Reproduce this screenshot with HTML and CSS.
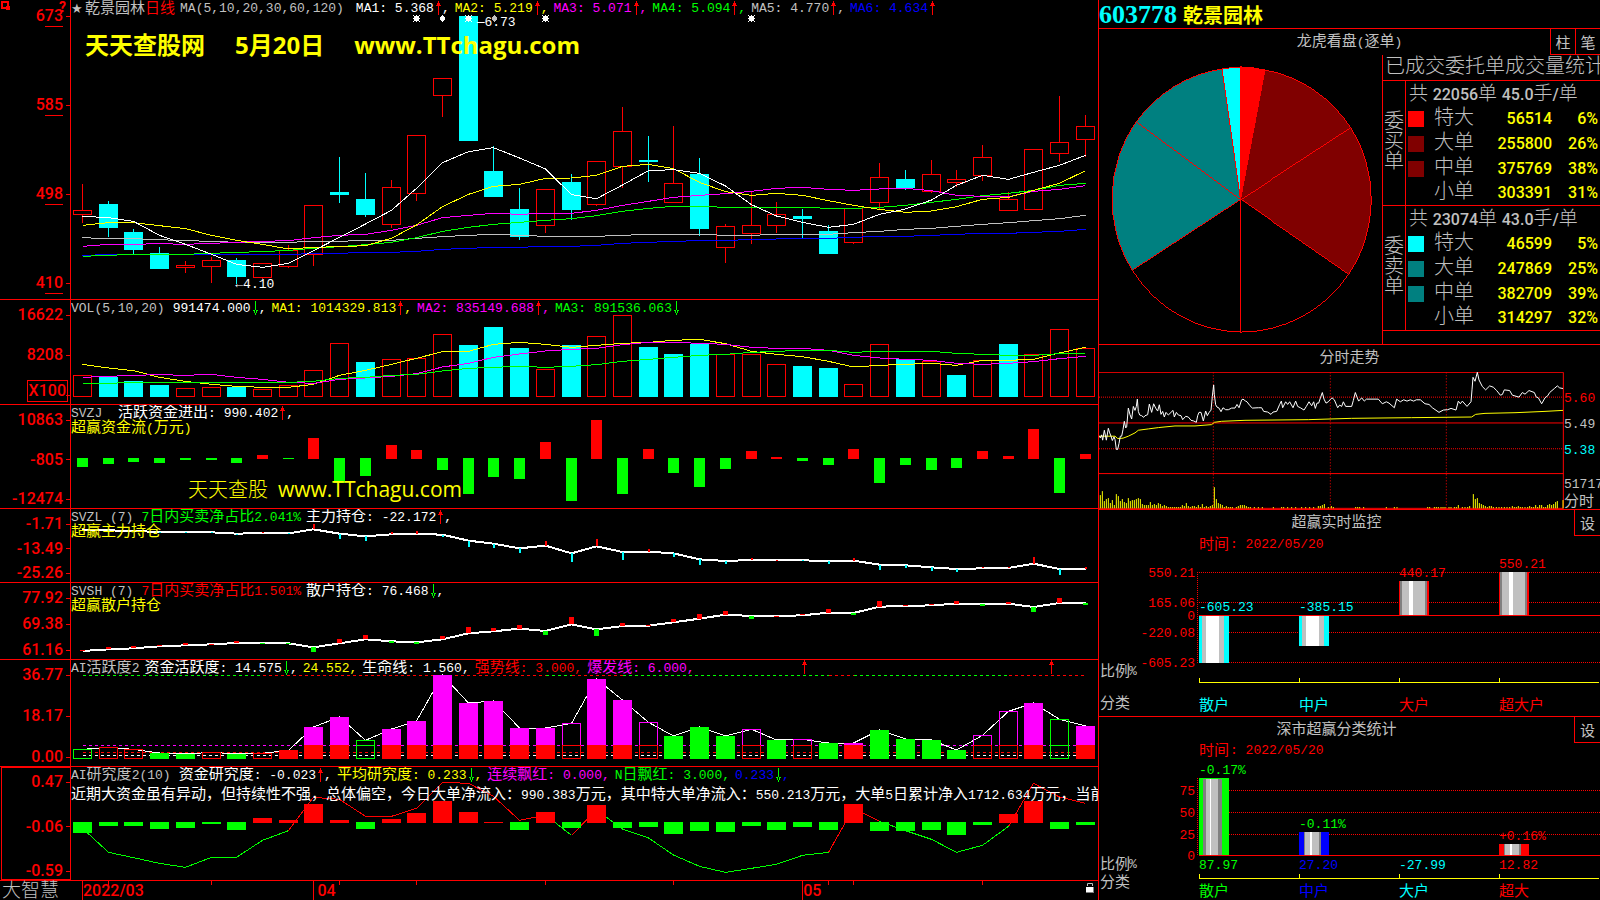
FILE: index.html
```
<!DOCTYPE html>
<html lang="zh-CN">
<head>
    <meta charset="UTF-8">
    <meta name="viewport" content="width=device-width, initial-scale=1.0">
    <title>大智慧 - 乾景园林 603778</title>
    <link rel="stylesheet" href="styles.css">
</head>
<body>
    <svg class="defs" aria-hidden="true">
        <symbol id="up" viewBox="0 0 8 14"><path d="M4 0h1v14h-1zM3 2h3v2h1v1h-5v-1h1z"/></symbol>
        <symbol id="down" viewBox="0 0 8 14"><path d="M4 0h1v14h-1zM3 12h3v-2h1v-1h-5v1h1z"/></symbol>
        <symbol id="star" viewBox="0 0 7 7"><path d="M1 1h5v5h-5zM0 0h1v1h-1zM6 0h1v1h-1zM0 6h1v1h-1zM6 6h1v1h-1zM3 0h1v7h-1zM0 3h7v1h-7z"/></symbol>
        <symbol id="star-thin" viewBox="0 0 7 7"><path d="M3 0h1v1h1v1h1v3h-1v1h-1v1h-1v-1h-1v-1h-1v-3h1v-1h1z"/></symbol>
    </svg>

    <div class="terminal">
        <!-- 左侧K线与指标 -->
        <main class="charts">
            <section class="panel">
                <div class="axis axis-price">
                    <svg class="pin" viewBox="0 0 9 9"><path d="M1 1h6v6h-6zM6 6h2v2h-2z"/></svg>
                    <span class="help">?</span>
                    <span>6<u>73</u></span><span>5<u>85</u></span><span>4<u>98</u></span><span>4<u>10</u></span>
                </div>
                <div class="plot">
                    <svg id="kline" class="chart" viewBox="0 0 1027 897" preserveAspectRatio="none"></svg>
                    <div class="readout">
                        <span class="silver"><span class="mark">★</span><span class="zh">乾景园林</span><span class="zh red">日线</span></span>
                        <span class="silver params">MA(5,10,20,30,60,120)</span>
                        <span class="white">MA1: 5.368<svg class="arrow red"><use href="#up"/></svg>,</span>
                        <span class="yellow">MA2: 5.219<svg class="arrow red"><use href="#up"/></svg>,</span>
                        <span class="magenta">MA3: 5.071<svg class="arrow red"><use href="#up"/></svg>,</span>
                        <span class="lime">MA4: 5.094<svg class="arrow red"><use href="#up"/></svg>,</span>
                        <span class="silver">MA5: 4.770<svg class="arrow red"><use href="#up"/></svg>,</span>
                        <span class="blue">MA6: 4.634<svg class="arrow red"><use href="#up"/></svg></span>
                    </div>
                    <div id="stars"></div>
                    <span class="note note-high">―6.73</span>
                    <span class="note note-low">←4.10</span>
                    <div class="banner"><span>天天查股网</span><span>5月20日</span><span>www.TTchagu.com</span></div>
                </div>
            </section>

            <section class="panel">
                <div class="axis">
                    <span>16622</span><span>8208</span><span></span>
                    <b class="unit">X100</b>
                </div>
                <div class="plot">
                    <svg id="volume" class="chart" viewBox="0 15 1027 312" preserveAspectRatio="none"></svg>
                    <div class="readout">
                        <span class="silver name">VOL(5,10,20)</span>
                        <span class="white">991474.000<svg class="arrow lime"><use href="#down"/></svg>,</span>
                        <span class="yellow">MA1: 1014329.813<svg class="arrow red"><use href="#up"/></svg>,</span>
                        <span class="magenta">MA2: 835149.688<svg class="arrow red"><use href="#up"/></svg>,</span>
                        <span class="lime">MA3: 891536.063<svg class="arrow lime"><use href="#down"/></svg></span>
                    </div>
                </div>
            </section>

            <section class="panel">
                <div class="axis"><span>10863</span><span>-805</span><span>-12474</span></div>
                <div class="plot">
                    <svg id="flow" class="chart" viewBox="0 330 1027 309" preserveAspectRatio="none"></svg>
                    <div class="readout">
                        <span class="silver name">SVZJ&nbsp;</span>
                        <span class="white"><span class="zh">活跃资金进出</span>: 990.402<svg class="arrow red"><use href="#up"/></svg>,</span>
                    </div>
                    <div class="readout yellow"><span><span class="zh">超赢资金流</span>(<span class="zh">万元</span>)</span></div>
                    <div class="banner-small"><span>天天查股</span><span class="site">www.TTchagu.com</span></div>
                </div>
            </section>

            <section class="panel">
                <div class="axis"><span>-1.71</span><span>-13.49</span><span>-25.26</span></div>
                <div class="plot">
                    <svg id="main-hold" class="chart" viewBox="0 12 1027 219" preserveAspectRatio="none"></svg>
                    <div class="readout">
                        <span class="silver name">SVZL (7)</span>
                        <span class="lime">7<span class="zh">日内买卖净占比</span>2.041%</span>
                        <span class="white"><span class="zh">主力持仓</span>: -22.172<svg class="arrow red"><use href="#up"/></svg>,</span>
                    </div>
                    <div class="readout yellow"><span class="zh">超赢主力持仓</span></div>
                </div>
            </section>

            <section class="panel">
                <div class="axis"><span>77.92</span><span>69.38</span><span>61.16</span></div>
                <div class="plot">
                    <svg id="retail-hold" class="chart" viewBox="0 234 1027 228" preserveAspectRatio="none"></svg>
                    <div class="readout">
                        <span class="silver name">SVSH (7)</span>
                        <span class="red">7<span class="zh">日内买卖净占比</span>1.501%</span>
                        <span class="white"><span class="zh">散户持仓</span>: 76.468<svg class="arrow lime"><use href="#down"/></svg>,</span>
                    </div>
                    <div class="readout yellow"><span class="zh">超赢散户持仓</span></div>
                </div>
            </section>

            <section class="panel">
                <div class="axis"><span>36.77</span><span>18.17</span><span>0.00</span></div>
                <div class="plot">
                    <svg id="activity" class="chart" viewBox="0 15 1027 318" preserveAspectRatio="none"></svg>
                    <div class="readout">
                        <span class="silver">AI<span class="zh">活跃度</span>2</span>
                        <span class="white"><span class="zh">资金活跃度</span>: 14.575<svg class="arrow lime"><use href="#down"/></svg>,</span>
                        <span class="yellow">24.552,</span>
                        <span class="white"><span class="zh">生命线</span>: 1.560,</span>
                        <span class="red"><span class="zh">强势线</span>: 3.000,</span>
                        <span class="magenta"><span class="zh">爆发线</span>: 6.000,</span>
                    </div>
                    <svg class="arrow red signal signal-a"><use href="#up"/></svg>
                    <svg class="arrow red signal signal-b"><use href="#up"/></svg>
                </div>
            </section>

            <section class="panel">
                <div class="axis axis-active"><span>0.47</span><span>-0.06</span><span>-0.59</span></div>
                <div class="plot">
                    <svg id="research" class="chart" viewBox="0 336 1027 339" preserveAspectRatio="none"></svg>
                    <div class="readout">
                        <span class="silver name">AI<span class="zh">研究度</span>2(10)</span>
                        <span class="white"><span class="zh">资金研究度</span>: -0.023<svg class="arrow red"><use href="#up"/></svg>,</span>
                        <span class="yellow"><span class="zh">平均研究度</span>: 0.233<svg class="arrow lime"><use href="#down"/></svg>,</span>
                        <span class="magenta"><span class="zh">连续飘红</span>: 0.000,</span>
                        <span class="lime">N<span class="zh">日飘红</span>: 3.000,</span>
                        <span class="blue">0.233<svg class="arrow lime"><use href="#down"/></svg>,</span>
                    </div>
                    <p class="comment"><span class="zh">近期大资金虽有异动，但持续性不强，总体偏空，今日大单净流入：</span>990.383<span class="zh">万元，其中特大单净流入：</span>550.213<span class="zh">万元，大单</span>5<span class="zh">日累计净入</span>1712.634<span class="zh">万元，当前</span></p>
                </div>
            </section>

            <footer class="timeline">
                <span class="brand">大智慧</span>
                <div class="dates">
                    <svg id="ticks" class="chart" viewBox="0 0 1027 19" preserveAspectRatio="none"></svg>
                    <time class="month month-03">2022/03</time>
                    <time class="month month-04">04</time>
                    <time class="month month-05">05</time>
                    <svg class="lock" viewBox="0 0 10 12"><path fill="none" stroke="#c0c0c0" d="M2.5 4v-2.500h5v2.500"/><path fill="#fff" d="M1 5h7v5h-7z"/><path fill="#808080" d="M8 5h1v6h-8v-1h7z"/></svg>
                </div>
            </footer>
        </main>

        <!-- 右侧行情 -->
        <aside class="side">
            <header class="stock"><span class="code">603778</span><span class="stock-name">乾景园林</span></header>

            <section class="box orders">
                <div class="box-head">
                    <h2>龙虎看盘<span class="num">(</span>逐单<span class="num">)</span></h2>
                    <div class="switch"><button type="button">柱</button><button type="button">笔</button></div>
                </div>
                <div class="orders-body">
                    <svg class="pie" viewBox="0 0 283 290">
                        <path class="f-red" d="M141.500 145V12A130.500 133 0 0 1 166 15z"/>
                        <path class="f-maroon" d="M141.500 145L166 15A130.500 133 0 0 1 252 73z"/>
                        <path class="f-maroon" d="M141.500 145L252 73A130.500 133 0 0 1 250 220z"/>
                        <path class="f-none" d="M141.500 145L250 220A130.500 133 0 0 1 141.500 278z"/>
                        <path class="f-none" d="M141.500 145V278A130.500 133 0 0 1 33 216z"/>
                        <path class="f-teal" d="M141.500 145L33 216A130.500 133 0 0 1 37 67z"/>
                        <path class="f-teal" d="M141.500 145L37 67A130.500 133 0 0 1 123 14z"/>
                        <path class="f-cyan" d="M141.500 145L123 14A130.500 133 0 0 1 141.500 12z"/>
                    </svg>
                    <div class="stats">
                        <h3>已成交委托单成交量统计</h3>
                        <table>
                            <tbody>
                                <tr><th class="kind" rowspan="5" scope="rowgroup">委<br>买<br>单</th><td class="total" colspan="4">共 <b>22056</b>单 <b>45.0</b>手<b>/</b>单</td></tr>
                                <tr><td class="key"><i class="swatch s-red"></i></td><th scope="row">特大</th><td class="count">56514</td><td>6%</td></tr>
                                <tr><td class="key"><i class="swatch s-maroon"></i></td><th scope="row">大单</th><td class="count">255800</td><td>26%</td></tr>
                                <tr><td class="key"><i class="swatch s-maroon"></i></td><th scope="row">中单</th><td class="count">375769</td><td>38%</td></tr>
                                <tr class="last"><td class="key"></td><th scope="row">小单</th><td class="count">303391</td><td>31%</td></tr>
                            </tbody>
                            <tbody>
                                <tr><th class="kind" rowspan="5" scope="rowgroup">委<br>卖<br>单</th><td class="total" colspan="4">共 <b>23074</b>单 <b>43.0</b>手<b>/</b>单</td></tr>
                                <tr><td class="key"><i class="swatch s-cyan"></i></td><th scope="row">特大</th><td class="count">46599</td><td>5%</td></tr>
                                <tr><td class="key"><i class="swatch s-teal"></i></td><th scope="row">大单</th><td class="count">247869</td><td>25%</td></tr>
                                <tr><td class="key"><i class="swatch s-teal"></i></td><th scope="row">中单</th><td class="count">382709</td><td>39%</td></tr>
                                <tr class="last"><td class="key"></td><th scope="row">小单</th><td class="count">314297</td><td>32%</td></tr>
                            </tbody>
                        </table>
                    </div>
                </div>
            </section>

            <section class="box intraday">
                <h2>分时走势</h2>
                <div class="intraday-body">
                    <div class="intraday-plot"><svg id="intraday" class="chart" viewBox="12 96 1395 414" preserveAspectRatio="none"></svg></div>
                    <div class="prices">
                        <span class="red">5.60</span>
                        <span class="silver">5.49</span>
                        <span class="cyan">5.38</span>
                        <span class="silver">51717</span>
                        <span class="silver zh">分时</span>
                    </div>
                </div>
            </section>

            <section class="box">
                <div class="box-head">
                    <h2>超赢实时监控</h2>
                    <button type="button">设</button>
                </div>
                <svg id="monitor" class="bars" viewBox="1099 536 501 180" preserveAspectRatio="xMinYMin meet"></svg>
            </section>

            <section class="box">
                <div class="box-head">
                    <h2>深市超赢分类统计</h2>
                    <button type="button">设</button>
                </div>
                <svg id="classes" class="bars" viewBox="1099 743 501 157" preserveAspectRatio="xMinYMin meet"></svg>
            </section>
        </aside>
    </div>
    <script src="script.js"></script>
</body>
</html>
```
FILE: styles.css
```
* {
    box-sizing: border-box;
}
body {
    margin: 0;
    background: #000;
    color: #c0c0c0;
    font-family: "Liberation Mono", "Noto Sans CJK SC", monospace;
    font-size: 13px;
    line-height: 15px;
    overflow: hidden;
}
h2, h3, p {
    margin: 0;
    font-weight: normal;
}
.defs {
    display: none;
}

/* 颜色 */
.red { color: #f00; }
.white { color: #fff; }
.yellow { color: #ff0; }
.magenta { color: #f0f; }
.lime { color: #0f0; }
.silver { color: #c0c0c0; }
.blue { color: #00f; }
.cyan { color: #0ff; }

.zh {
    font-size: 15px;
}

/* 全体布局 */
.terminal {
    display: grid;
    grid-template-columns: minmax(0, 1099fr) minmax(0, 501fr);
    height: 100vh;
}
.charts {
    display: grid;
    grid-template-rows: 300fr 105fr 104fr 74fr 77fr 107fr 114fr 19fr;
    min-height: 0;
}
.panel {
    display: grid;
    grid-template-columns: 71px minmax(0, 1fr);
    min-height: 0;
    border-bottom: 1px solid #f00;
}

/* 左侧刻度 */
.axis {
    position: relative;
    display: flex;
    flex-direction: column;
    justify-content: space-between;
    min-height: 0;
    padding-top: 6px;
    border-right: 1px solid #f00;
    color: #f00;
    font-family: Roboto, sans-serif;
    font-size: 16px;
    font-weight: 500;
    text-align: right;
}
.axis > span:not(.help) {
    display: flex;
    justify-content: flex-end;
    align-items: center;
    height: 18px;
    line-height: 20px;
}
.axis > span:not(.help)::after {
    content: "";
    width: 4px;
    height: 1px;
    margin-left: 3px;
    background: #f00;
}
.axis-price {
    padding: 7px 0;
}
.axis u {
    border-bottom: 1px solid #f00;
    text-decoration: none;
}
.axis-active {
    outline: 1px solid #f00;
    outline-offset: -1px;
    margin-left: 1px;
}
.pin {
    position: absolute;
    left: 1px;
    top: 1px;
    width: 9px;
    height: 9px;
    fill: none;
    stroke: #f00;
    stroke-width: 2;
}
.help {
    position: absolute;
    right: 4px;
    top: 0;
    font-weight: 700;
    font-size: 14px;
}
.unit {
    position: absolute;
    right: 2px;
    bottom: 2px;
    padding: 0 1px;
    border: 1px solid #f00;
    font-weight: 500;
    line-height: 20px;
}

/* 图表 */
.plot {
    position: relative;
    min-height: 0;
    padding-top: 1px;
    overflow: hidden;
    border-right: 1px solid #f00;
}
.chart {
    position: absolute;
    left: 0;
    top: 0;
    width: 100%;
    height: 100%;
    shape-rendering: crispEdges;
}
.chart * {
    vector-effect: non-scaling-stroke;
}
.readout {
    position: relative;
    display: flex;
    gap: 5px;
    height: 15px;
    white-space: nowrap;
}
.name {
    margin-right: 3px;
}
.params {
    margin-right: 7px;
}
.mark {
    display: inline-block;
    width: 14px;
    font-family: "DejaVu Sans", sans-serif;
}
.arrow {
    width: 8px;
    height: 14px;
    vertical-align: top;
    fill: currentColor;
    shape-rendering: crispEdges;
}
.signal {
    position: absolute;
    top: 0;
}
.signal-a { left: 71%; }
.signal-b { left: 95%; }
.comment {
    position: relative;
    margin-top: 5px;
    color: #fff;
    white-space: nowrap;
}
.star {
    position: absolute;
    top: 15px;
    width: 7px;
    height: 7px;
    margin-left: -3px;
    fill: currentColor;
    shape-rendering: crispEdges;
}
.note {
    position: absolute;
    color: #fff;
}
.note-high { left: 39.5%; top: 15px; }
.note-low { left: 16%; top: 277px; }

/* 水印 */
.banner {
    position: absolute;
    left: 14px;
    top: 30px;
    display: flex;
    gap: 30px;
    color: #ff0;
    font-family: "Open Sans", "Noto Sans CJK SC", sans-serif;
    font-size: 24px;
    font-weight: bold;
    line-height: 30px;
    white-space: nowrap;
}
.banner-small {
    position: absolute;
    left: 117px;
    top: 70px;
    display: flex;
    gap: 10px;
    color: #ff0;
    font-family: "Noto Sans CJK SC", sans-serif;
    font-size: 20px;
    font-weight: 300;
    line-height: 28px;
}
.site {
    font-family: "Open Sans", sans-serif;
    font-size: 21px;
    font-weight: 400;
}

/* 时间轴 */
.timeline {
    display: grid;
    grid-template-columns: 71px minmax(0, 1fr);
    min-height: 0;
}
.brand {
    padding-left: 2px;
    font-size: 19px;
    font-weight: 300;
    line-height: 22px;
    height: 19px;
}
.dates {
    position: relative;
    border-right: 1px solid #f00;
}
.month {
    position: absolute;
    top: 0;
    color: #f00;
    font-family: Roboto, sans-serif;
    font-size: 16px;
    font-weight: 500;
    line-height: 20px;
}
.month-03 { left: 12px; }
.month-04 { left: 24%; }
.month-05 { left: 71.300%; }
.lock {
    position: absolute;
    right: 3px;
    top: 1px;
    width: 10px;
    height: 12px;
}

/* 右侧 */
.side {
    display: grid;
    grid-template-rows: 29fr 316fr 165fr 207fr 183fr;
    min-height: 0;
}
.stock {
    display: flex;
    align-items: center;
    gap: 6px;
    border-bottom: 1px solid #f00;
}
.code {
    color: #0ff;
    font-family: "Liberation Serif", serif;
    font-size: 26px;
    font-weight: bold;
}
.stock-name {
    color: #ff0;
    font-family: "Noto Sans CJK SC", sans-serif;
    font-size: 20px;
    font-weight: bold;
}
.box {
    display: flex;
    flex-direction: column;
    min-height: 0;
    overflow: hidden;
    border-bottom: 1px solid #f00;
}
.box:last-child {
    border-bottom: 0;
}
.box h2 {
    flex: 1;
    font-size: 15px;
    line-height: 27px;
    text-align: center;
}
.num {
    font-size: 13px;
}
.box-head {
    position: relative;
    display: flex;
    flex: none;
    height: 26px;
}
button {
    width: 26px;
    height: 26px;
    padding: 0;
    border: 0 solid #f00;
    border-width: 0 0 1px 1px;
    background: #000;
    color: #c0c0c0;
    font-family: "Noto Sans CJK SC", sans-serif;
    font-size: 15px;
    line-height: 22px;
    cursor: pointer;
}
.switch {
    position: absolute;
    right: 0;
    top: 0;
    display: flex;
}
.switch button {
    width: 25px;
}

/* 委托单统计 */
.orders-body {
    display: flex;
    flex: 1;
    min-height: 0;
}
.pie {
    flex: 1;
    min-width: 0;
    height: 100%;
    stroke: #f00;
    shape-rendering: crispEdges;
}
.f-red { fill: #f00; }
.f-maroon { fill: #800000; }
.f-teal { fill: #008080; }
.f-cyan { fill: #0ff; }
.f-none { fill: none; }
.stats {
    width: 218px;
    overflow: hidden;
    border-left: 1px solid #f00;
}
.stats h3 {
    height: 26px;
    padding-left: 2px;
    border-bottom: 1px solid #f00;
    font-size: 20px;
    font-weight: 300;
    line-height: 26px;
    white-space: nowrap;
}
.stats table {
    width: 100%;
    border-collapse: separate;
    border-spacing: 0;
}
.stats td, .stats th {
    height: 25px;
    padding: 0;
    line-height: 20px;
}
.stats td {
    color: #ff0;
    font-family: Roboto, "Noto Sans CJK SC", sans-serif;
    font-size: 16px;
    font-weight: 500;
    text-align: right;
}
.stats td:last-child {
    padding-right: 2px;
}
.stats td.count {
    padding-right: 3px;
}
.stats th {
    width: 40px;
    font-size: 20px;
    font-weight: 300;
    text-align: left;
}
.stats th.kind {
    width: 23px;
    border-right: 1px solid #f00;
    border-bottom: 1px solid #f00;
    text-align: center;
}
.stats td.total {
    padding-left: 3px;
    color: #c0c0c0;
    font-size: 19px;
    font-weight: 300;
    text-align: left;
    white-space: nowrap;
}
.total b {
    font-size: 16px;
    font-weight: 500;
    line-height: 16px;
}
.last td, .last th {
    border-bottom: 1px solid #f00;
}
.stats td.key {
    width: 28px;
    text-align: left;
}
.swatch {
    display: block;
    width: 16px;
    height: 16px;
    margin-left: 2px;
}
.s-red { background: #f00; }
.s-maroon { background: #800000; }
.s-cyan { background: #0ff; }
.s-teal { background: #008080; }

/* 分时走势 */
.intraday h2 {
    flex: none;
    height: 27px;
}
.intraday-body {
    display: grid;
    grid-template-columns: minmax(0, 1fr) 36px;
    flex: 1;
    min-height: 0;
}
.intraday-plot {
    position: relative;
}
.prices {
    display: flex;
    flex-direction: column;
    padding-top: 19px;
    overflow: hidden;
}
.prices span {
    margin-bottom: 11px;
}
.prices span:nth-child(3) {
    margin-bottom: 19px;
}
.prices span:nth-child(4) {
    margin-bottom: 3px;
}
.bars {
    flex: 1;
    width: 100%;
    min-height: 0;
    shape-rendering: crispEdges;
}
.bars text {
    fill: currentColor;
}
```
FILE: script.js
```
const RED = '#f00', LIME = '#0f0', CYAN = '#0ff', YELLOW = '#ff0', MAGENTA = '#f0f', SILVER = '#c0c0c0', GRAY = '#808080', BLUE = '#00f', WHITE = '#fff';

function add(svg, tag, attrs, text) {
    const el = document.createElementNS('http://www.w3.org/2000/svg', tag);
    for (const k in attrs) el.setAttribute(k, attrs[k]);
    if (text) el.textContent = text;
    svg.appendChild(el);
    return el;
}
const $ = id => document.getElementById(id);
const cx = i => Math.round(11 + 25.715 * i) + 0.5;

function line(svg, ys, color, width = 1, from = 0) {
    const points = ys.map((y, i) => cx(i + from) + ',' + y).join(' ');
    add(svg, 'polyline', { points, fill: 'none', stroke: color, 'stroke-width': width });
}
function solid(svg, i, y1, y2, color, w = 19) {
    add(svg, 'rect', { x: cx(i) - w / 2, y: Math.min(y1, y2), width: w, height: Math.max(Math.abs(y2 - y1), 3), fill: color });
}
function hollow(svg, i, y1, y2, color) {
    add(svg, 'rect', { x: cx(i) - 9, y: y1, width: 18, height: Math.max(y2 - y1, 3), fill: 'none', stroke: color });
}
function seg(svg, x1, y1, x2, y2, color, dash) {
    const a = { x1, y1, x2, y2, stroke: color };
    if (dash) a['stroke-dasharray'] = dash;
    add(svg, 'line', a);
}

// K线: 方向, 最高, 实体上, 实体下, 最低
const candles = [
    ['r', 552, 631, 644, 668], ['c', 603, 612, 684, 711], ['c', 687, 696, 750, 762], ['c', 741, 759, 807, 807],
    ['r', 783, 796, 802, 819], ['r', 771, 780, 800, 849], ['c', 774, 780, 831, 852], ['r', 790, 790, 832, 836],
    ['r', 735, 750, 800, 803], ['r', 616, 616, 764, 798], ['c', 471, 576, 585, 609], ['c', 519, 597, 645, 651],
    ['r', 540, 562, 674, 684], ['r', 406, 406, 580, 603], ['r', 235, 235, 287, 351], ['c', 48, 48, 423, 423],
    ['c', 438, 513, 591, 591], ['c', 564, 627, 711, 720], ['r', 568, 568, 677, 699], ['c', 522, 546, 630, 660],
    ['r', 484, 484, 613, 618], ['r', 321, 394, 500, 564], ['c', 408, 480, 486, 546], ['r', 378, 550, 607, 607],
    ['c', 474, 522, 687, 708], ['r', 672, 679, 742, 789], ['r', 574, 676, 700, 732], ['r', 606, 643, 677, 699],
    ['c', 627, 648, 657, 714], ['c', 675, 693, 762, 762], ['r', 626, 626, 727, 732], ['r', 489, 532, 607, 628],
    ['c', 510, 537, 564, 570], ['r', 480, 523, 574, 579], ['r', 510, 538, 547, 560], ['r', 435, 472, 527, 543],
    ['r', 576, 598, 631, 631], ['r', 448, 448, 628, 628], ['r', 288, 427, 460, 486], ['r', 345, 379, 419, 470]
];
const kline = $('kline');
candles.forEach(([t, hi, top, bottom, lo], i) => {
    const color = t === 'r' ? RED : CYAN;
    if (hi < top) seg(kline, cx(i), hi, cx(i), top, color);
    if (lo > bottom) seg(kline, cx(i), bottom, cx(i), lo, color);
    if (t === 'r') hollow(kline, i, top, bottom, color);
    else solid(kline, i, top, bottom, color);
});
line(kline, [766, 764, 763, 763, 763, 763, 763, 763, 763, 761, 760, 757, 757, 754, 748, 745, 742, 742, 739, 739, 736, 730, 727, 724, 722, 721, 719, 717, 715, 715, 712, 709, 709, 706, 703, 700, 700, 697, 694, 688], BLUE);
line(kline, [713, 716, 716, 719, 722, 724, 727, 727, 727, 724, 724, 721, 721, 715, 710, 706, 703, 706, 709, 709, 709, 706, 703, 703, 703, 706, 706, 703, 703, 703, 698, 694, 688, 685, 679, 673, 668, 662, 656, 646], SILVER);
line(kline, [769, 766, 763, 763, 763, 760, 757, 755, 751, 745, 740, 734, 727, 713, 694, 682, 673, 667, 661, 656, 647, 634, 625, 619, 619, 622, 622, 622, 622, 625, 625, 622, 616, 607, 598, 587, 580, 571, 556, 550], LIME);
line(kline, [739, 733, 733, 731, 733, 730, 727, 724, 722, 713, 706, 703, 691, 676, 653, 646, 640, 643, 640, 640, 631, 616, 604, 592, 586, 581, 574, 565, 562, 568, 571, 567, 565, 572, 586, 589, 590, 574, 568, 557], MAGENTA);
line(kline, [676, 668, 668, 677, 686, 706, 721, 733, 747, 742, 740, 737, 715, 675, 620, 583, 559, 553, 535, 534, 526, 499, 493, 506, 547, 575, 586, 580, 586, 602, 616, 628, 637, 633, 620, 598, 592, 571, 550, 512], YELLOW);
line(kline, [649, 653, 664, 706, 733, 763, 793, 802, 790, 752, 712, 672, 631, 565, 488, 455, 443, 474, 507, 584, 596, 555, 512, 509, 520, 558, 614, 648, 667, 682, 673, 643, 627, 600, 556, 526, 538, 517, 496, 466], WHITE);

// 公告标记
[[13, 'star', 'white'], [14, 'star-thin', 'white'], [15, 'star', 'white'], [16, 'star-thin', 'silver'], [18, 'star', 'white'], [26, 'star', 'white']].forEach(([i, icon, color]) => {
    $('stars').insertAdjacentHTML('beforeend', `<svg class="star ${color}" style="left:${(cx(i) / 10.27).toFixed(2)}%"><use href="#${icon}"/></svg>`);
});

// 成交量
const volume = $('volume');
'r241 c245 c258 c270 r280 r277 c276 r283 r271 r226 r145 c201 r193 r190 r118 c150 c96 c159 r223 c150 r124 r61 c156 c177 c147 r178 r178 r208 c213 c219 r268 r148 c193 r199 c240 r196 c147 r178 r103 r160'
    .split(' ').forEach((v, i) => {
        if (v[0] === 'r') hollow(volume, i, +v.slice(1), 304, RED);
        else solid(volume, i, +v.slice(1), 306, CYAN);
    });
line(volume, [208, 219, 227, 247, 259, 268, 274, 277, 277, 268, 241, 226, 208, 190, 170, 169, 148, 142, 148, 157, 151, 145, 142, 136, 133, 146, 169, 178, 185, 199, 216, 211, 208, 205, 211, 196, 196, 193, 174, 157], YELLOW);
line(volume, [247, 244, 241, 239, 241, 238, 247, 253, 262, 265, 253, 249, 244, 236, 216, 205, 187, 177, 168, 163, 160, 149, 142, 142, 145, 148, 157, 160, 160, 166, 181, 189, 193, 196, 205, 208, 205, 200, 191, 184], MAGENTA);
line(volume, [265, 265, 262, 262, 262, 262, 262, 262, 262, 259, 250, 247, 241, 238, 228, 220, 217, 214, 217, 214, 209, 199, 193, 187, 181, 178, 172, 169, 166, 166, 172, 169, 169, 169, 175, 178, 181, 181, 176, 175], LIME);

// 资金流
[516, 507, 501, 504, 495, 495, 504, 480, 492, 429, 564, 543, 450, 465, 525, 597, 546, 552, 441, 618, 375, 597, 462, 534, 576, 522, 468, 486, 498, 510, 462, 564, 510, 525, 519, 468, 483, 402, 594, 477]
    .forEach((y, i) => y > 490 ? solid($('flow'), i, 489, y, LIME, 11) : solid($('flow'), i, y, 492, RED, 11));

// 主力持仓
const mainLine = [75, 76, 78, 81, 82, 82, 86, 84, 85, 73, 86, 94, 88, 87, 89, 107, 116, 130, 122, 145, 124, 141, 140, 145, 163, 168, 165, 166, 166, 168, 167, 179, 181, 187, 192, 190, 189, 176, 192, 192];
const mainMarks = [78, 77, 79, 83, 84, 84, 89, 81, 87, 57, 101, 107, 81, 78, 96, 126, 129, 144, 108, 171, 102, 165, 132, 156, 180, 177, 159, 164, 168, 177, 159, 195, 189, 198, 201, 186, 186, 156, 210, 186];
line($('main-hold'), mainLine, WHITE, 2);
mainMarks.forEach((y, i) => solid($('main-hold'), i, mainLine[i], y, y > mainLine[i] ? CYAN : RED, 2));

// 散户持仓
const retailLine = [438, 433, 430, 424, 421, 418, 414, 414, 415, 427, 415, 403, 409, 412, 403, 385, 379, 371, 378, 358, 373, 363, 362, 352, 341, 329, 333, 333, 331, 323, 324, 305, 303, 301, 296, 298, 296, 306, 294, 294];
const retailMarks = [435, 426, 423, 420, 414, 417, 408, 417, 417, 440, 402, 390, 413, 416, 393, 366, 369, 360, 390, 336, 393, 354, 359, 342, 327, 318, 342, 332, 326, 312, 330, 288, 299, 296, 288, 303, 290, 321, 279, 300];
line($('retail-hold'), retailLine, WHITE, 2);
retailMarks.forEach((y, i) => solid($('retail-hold'), i, retailLine[i], y, y > retailLine[i] ? LIME : RED, 5));

// AI活跃度: G/R/M 实心, g/r/m 空心
const activity = $('activity');
const act = 'g283 r277 r283 G294 G297 r292 G297 r295 R286 M216 M186 g256 M222 M198 M60 M144 M138 M219 M219 m205 M72 M135 m202 G243 G216 G243 m223 G255 m253 G264 M264 G225 G252 G255 G285 m241 m169 M144 g193 M213'.split(' ');
[[0, 7, LIME], [7, 18, RED], [18, 19, LIME], [19, 21, RED], [21, 29, LIME], [29, 30, RED], [30, 36, LIME], [36, 39, RED]]
    .forEach(([a, b, color]) => seg(activity, cx(a), 61.5, cx(b), 61.5, color, '3 3'));
seg(activity, cx(0), 271.5, cx(39), 271.5, MAGENTA, '3 3');
seg(activity, cx(0), 292.5, cx(39), 292.5, RED, '3 3');
seg(activity, cx(0), 301.5, cx(39), 301.5, WHITE, '3 3');
line(activity, act.map(v => +v.slice(1)), WHITE);
act.forEach((v, i) => {
    const y = +v.slice(1), type = v[0];
    if (type === 'G') solid(activity, i, y, 312, LIME);
    if (type === 'R') solid(activity, i, y, 312, RED);
    if (type === 'r') hollow(activity, i, y, 310, RED);
    if (type === 'g') hollow(activity, i, y, 310, LIME);
    if (type === 'g' && y < 271) hollow(activity, i, 271, 310, LIME);
    if (type === 'M') {
        solid(activity, i, y, 270, MAGENTA);
        solid(activity, i, 270, 312, RED);
    }
    if (type === 'm') {
        hollow(activity, i, y, 271, MAGENTA);
        hollow(activity, i, 271, 310, RED);
    }
});

// AI研究度
const research = $('research');
const res = [520, 592, 608, 625, 637, 607, 607, 556, 527, 427, 433, 484, 484, 460, 382, 385, 424, 496, 480, 541, 465, 522, 549, 600, 634, 652, 640, 628, 601, 592, 460, 499, 527, 553, 592, 571, 514, 385, 426, 445];
[[0, 8, LIME], [8, 18, RED], [18, 19, LIME], [19, 20, RED], [20, 29, LIME], [29, 31, RED], [31, 36, LIME], [36, 39, RED]]
    .forEach(([a, b, color]) => line(research, res.slice(a, b + 1), color, 1, a));
[534, 513, 513, 522, 519, 507, 525, 489, 495, 447, 495, 522, 492, 474, 438, 471, 501, 525, 471, 519, 450, 519, 516, 537, 528, 531, 513, 525, 516, 525, 447, 528, 528, 525, 540, 510, 477, 438, 522, 510]
    .forEach((y, i) => y > 502 ? solid(research, i, 501, y, LIME) : solid(research, i, y, 504, RED));

// 时间轴刻度
[0, 9, 28].forEach(i => seg($('ticks'), cx(i), 0, cx(i), 19, RED));
[1, 5, 10, 13, 18, 23, 29, 30, 35].forEach(i => seg($('ticks'), cx(i), 0, cx(i), 4, RED));

// 分时
const intraday = $('intraday');
[[172, '1 1'], [328, '1 1'], [97], [250], [403], [508]].forEach(([y, dash]) => seg(intraday, 12, y, 1405, y, RED, dash));
[[355, '1 2'], [706, '1 2'], [1054, '1 2'], [1405]].forEach(([x, dash]) => seg(intraday, x, 97, x, 508, RED, dash));
const minuteVolume = [40, 52, 22, 28, 31, 16, 25, 10, 43, 37, 22, 28, 19, 16, 31, 22, 25, 25, 28, 31, 28, 13, 10, 10, 10, 19, 10, 13, 10, 16, 13, 7, 10, 7, 4, 4, 4, 4, 4, 4, 4, 10, 7, 16, 7, 4, 7, 7, 4, 10, 4, 13, 4, 7, 4, 7, 10, 64, 28, 16, 13, 10, 4, 7, 4, 4, 4, 0, 4, 7, 10, 10, 10, 7, 4, 4, 0, 4, 0, 4, 0, 4];
minuteVolume.forEach((h, i) => h && seg(intraday, 16 + i * 6, 508 - h, 16 + i * 6, 508, YELLOW));
[[535, 4], [560, 4], [566, 4], [578, 4], [590, 4], [602, 4], [620, 4], [632, 4], [644, 4], [656, 4], [670, 7], [676, 7], [682, 10], [688, 13], [700, 4], [709, 7], [715, 4], [782, 4], [788, 4], [794, 4], [806, 4], [874, 4], [898, 4], [906, 4], [998, 4], [1004, 4], [1018, 4], [1024, 4], [1030, 4], [1038, 4], [1044, 4], [1050, 4], [1062, 4], [1068, 4], [1078, 4], [1084, 4], [1090, 10], [1102, 4], [1110, 4], [1118, 4], [1124, 7], [1135, 43], [1141, 28], [1147, 31], [1153, 16], [1159, 13], [1165, 10], [1171, 7], [1177, 4], [1183, 7], [1189, 7], [1195, 4], [1204, 4], [1212, 4], [1220, 4], [1228, 4], [1236, 4], [1244, 4], [1252, 7], [1258, 4], [1264, 4], [1270, 7], [1276, 4], [1282, 4], [1290, 4], [1298, 4], [1304, 7], [1310, 4], [1316, 4], [1322, 10], [1328, 4], [1334, 10], [1340, 10], [1346, 4], [1352, 4], [1358, 10], [1364, 13], [1370, 10], [1376, 13], [1382, 19], [1387, 22], [1404, 25]]
    .forEach(([x, h]) => seg(intraday, x, 508 - h, x, 508, YELLOW));
add(intraday, 'polyline', { fill: 'none', stroke: YELLOW, points: '12,290 60,290 68,297 84,296 100,290 120,280 130,272 160,268 190,264 240,259 300,259 350,255 358,248 380,245 450,242 640,240 770,236 950,234 1130,232 1142,224 1170,221 1260,219 1350,215 1404,212' });
add(intraday, 'polyline', { fill: 'none', stroke: WHITE, points: '12,290 16,295 20,286 23,302 28,272 34,302 40,266 44,280 48,290 52,303 57,292 60,300 64,330 68,330 72,312 76,290 80,290 84,270 88,245 92,265 95,262 100,205 105,225 110,238 115,200 120,212 124,200 127,178 130,215 134,226 140,228 146,233 150,228 158,225 163,193 170,218 176,192 182,205 188,214 193,195 198,224 203,215 208,232 213,218 220,226 228,218 234,212 238,232 244,218 250,226 258,228 263,240 272,230 280,232 288,242 296,244 304,248 308,228 312,218 318,218 325,244 332,214 337,228 342,218 348,212 352,170 356,135 358,165 362,195 366,202 372,205 378,216 384,204 392,210 400,210 410,205 420,205 426,194 432,204 440,180 444,178 452,184 456,186 465,198 472,205 490,204 500,204 506,215 518,217 528,224 534,217 545,215 554,194 559,184 563,204 572,186 578,194 584,186 594,204 602,184 608,200 616,204 627,211 634,200 642,186 650,198 656,186 661,206 666,190 671,190 677,172 682,158 687,178 693,190 700,186 705,180 711,174 718,180 728,204 734,196 740,200 745,186 752,200 770,200 775,182 781,158 786,172 791,184 800,174 808,184 814,178 850,178 862,192 874,186 882,190 898,204 905,178 916,186 926,180 936,184 946,180 956,184 964,180 976,180 990,192 1002,194 1012,204 1032,218 1045,211 1058,210 1068,206 1083,211 1090,184 1096,192 1102,184 1116,200 1128,186 1131,150 1134,112 1140,124 1147,97 1152,120 1162,140 1172,150 1184,138 1195,142 1205,152 1216,166 1222,164 1228,150 1244,152 1252,166 1272,172 1282,158 1290,163 1302,152 1318,158 1324,172 1330,174 1340,192 1350,174 1358,168 1364,158 1378,146 1387,138 1394,144 1404,146' });

// 右下柱图: stripes 为 [起, 止, 颜色]
function label(svg, x, y, text, color, zh, anchor) {
    add(svg, 'text', { x, y: y + (zh ? 5 : 4), class: color + (zh ? ' zh' : ''), 'text-anchor': anchor || 'start' }, text);
}
function bar(svg, x, y1, y2, stripes) {
    stripes.forEach(([a, b, color]) => add(svg, 'rect', { x: x + a, y: y1, width: b - a, height: y2 - y1, fill: color }));
}
function frame(svg, date, top, bottom, dotted, zero, base) {
    label(svg, 1199, date, '时间', 'red', true);
    label(svg, 1230, date, ': 2022/05/20', 'red');
    dotted.forEach(y => seg(svg, 1199, y + 0.5, 1600, y + 0.5, RED, '1 1'));
    seg(svg, 1197.5, top, 1197.5, bottom, RED, '1 1');
    seg(svg, 1199, zero + 0.5, 1600, zero + 0.5, RED);
    add(svg, 'path', { fill: 'none', stroke: YELLOW, d: `M1199.5 ${base - 4}v4.5H1599M1299.5 ${base - 4}v4M1399.5 ${base - 4}v4M1499.5 ${base - 4}v4` });
}

const monitor = $('monitor');
const down = [[0, 3, CYAN], [3, 7, SILVER], [7, 20, WHITE], [20, 25, SILVER], [25, 30, CYAN]];
const up = [[0, 1, RED], [1, 3, GRAY], [3, 10, SILVER], [10, 14, WHITE], [14, 26, SILVER], [26, 28, GRAY], [28, 30, RED]];
frame(monitor, 544, 572, 663, [572, 602, 632, 662], 615, 682);
bar(monitor, 1199, 616, 663, down);
bar(monitor, 1299, 616, 646, down);
bar(monitor, 1399, 581, 615, up);
bar(monitor, 1499, 572, 615, up);
[[573, '550.21'], [603, '165.06'], [616, '0'], [633, '-220.08'], [663, '-605.23']].forEach(([y, t]) => label(monitor, 1195, y, t, 'red', false, 'end'));
[[1199, 607, '-605.23', 'cyan'], [1299, 607, '-385.15', 'cyan'], [1399, 573, '440.17', 'red'], [1499, 564, '550.21', 'red']].forEach(a => label(monitor, ...a));
[[1199, 705, '散户', 'cyan'], [1299, 705, '中户', 'cyan'], [1399, 705, '大户', 'red'], [1499, 705, '超大户', 'red'], [1100, 671, '比例', 'silver'], [1100, 703, '分类', 'silver']].forEach(a => label(monitor, ...a, true));
label(monitor, 1129, 671, '%', 'silver');

const classes = $('classes');
const pillar = color => [[0, 5, color], [5, 6, GRAY], [6, 11, SILVER], [11, 13, WHITE], [13, 20, SILVER], [20, 22, GRAY], [22, 30, color]];
frame(classes, 750, 778, 855, [790, 812, 834], 855, 878);
bar(classes, 1199, 778, 779, [[0, 30, LIME]]);
bar(classes, 1199, 779, 855, [[0, 4, LIME], [4, 7, GRAY], [7, 11, SILVER], [11, 12, WHITE], [12, 19, SILVER], [19, 23, GRAY], [23, 30, LIME]]);
bar(classes, 1299, 832, 855, pillar(BLUE));
bar(classes, 1499, 844, 855, pillar(RED));
[[791, '75'], [813, '50'], [835, '25'], [856, '0']].forEach(([y, t]) => label(classes, 1195, y, t, 'red', false, 'end'));
[[1199, 770, '-0.17%', 'lime'], [1299, 824, '-0.11%', 'lime'], [1499, 836, '+0.16%', 'red'], [1199, 865, '87.97', 'lime'], [1299, 865, '27.20', 'blue'], [1399, 865, '-27.99', 'cyan'], [1499, 865, '12.82', 'red']].forEach(a => label(classes, ...a));
[[1199, 891, '散户', 'lime'], [1299, 891, '中户', 'blue'], [1399, 891, '大户', 'cyan'], [1499, 891, '超大', 'red'], [1100, 864, '比例', 'silver'], [1100, 882, '分类', 'silver']].forEach(a => label(classes, ...a, true));
label(classes, 1129, 864, '%', 'silver');
```
